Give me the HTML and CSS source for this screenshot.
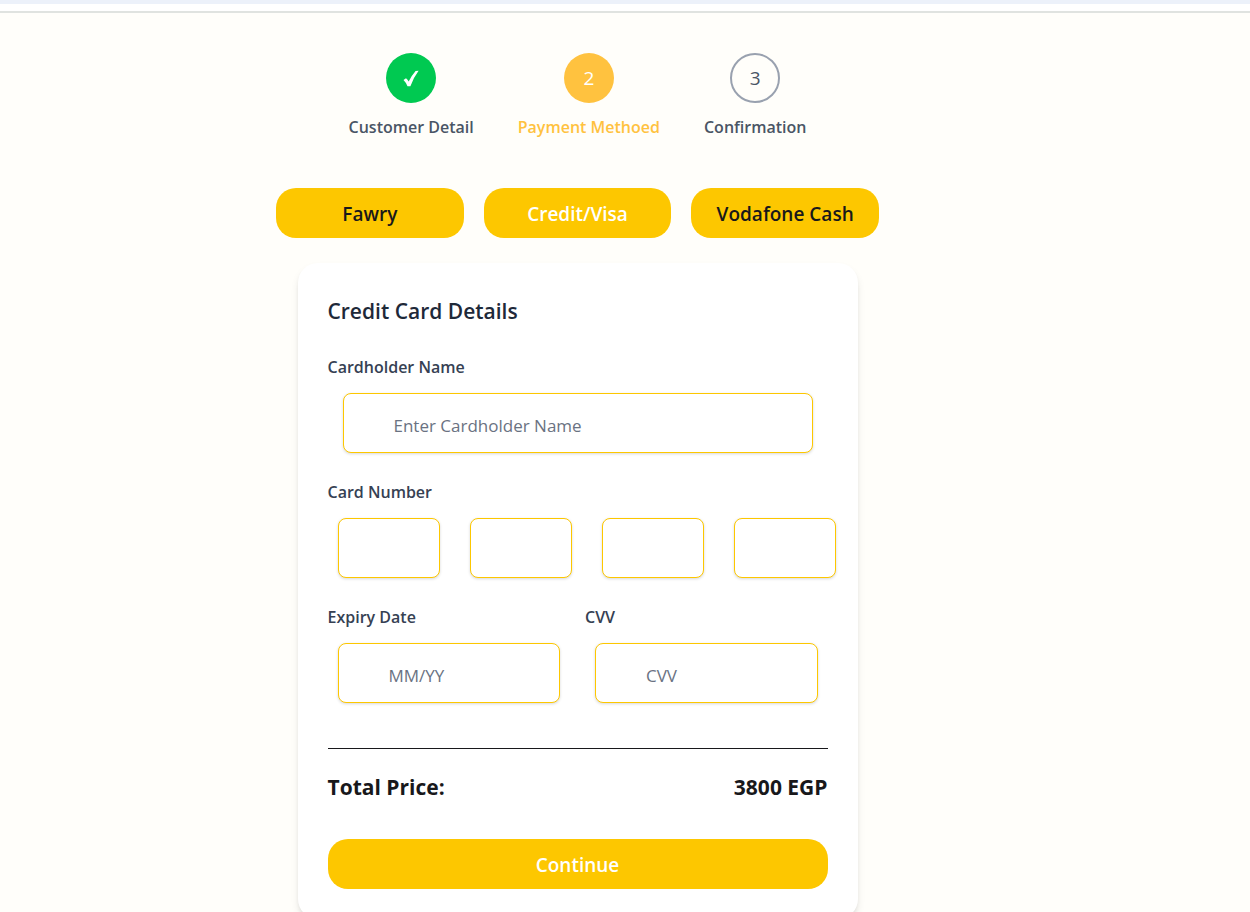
FILE: index.html
```html
<!DOCTYPE html>
<html lang="en">
<head>
<meta charset="utf-8">
<meta name="viewport" content="width=device-width, initial-scale=1">
<title>Payment Method</title>
<link rel="stylesheet" href="styles.css">
</head>
<body>
<header class="topbar"></header>
<main class="checkout">
  <ol class="steps">
    <li class="step">
      <span class="step-circle step-circle-done">
        <svg class="check" viewBox="0 0 18 18" role="img" aria-label="Done"><path d="M1.500 11 4 9.200Q5.700 10.400 6.700 12.600Q9.800 6.200 13.600 2L16.600 1.700Q11.500 8.500 8.400 17.200H5.500Q3.900 13.300 1.500 11Z"/></svg>
      </span>
      <span class="step-label">Customer Detail</span>
    </li>
    <li class="step step-current" aria-current="step">
      <span class="step-circle step-circle-current">2</span>
      <span class="step-label">Payment Methoed</span>
    </li>
    <li class="step">
      <span class="step-circle step-circle-next">3</span>
      <span class="step-label">Confirmation</span>
    </li>
  </ol>

  <div class="methods">
    <button type="button" class="button">Fawry</button>
    <button type="button" class="button button-light" aria-pressed="true">Credit/Visa</button>
    <button type="button" class="button">Vodafone Cash</button>
  </div>

  <form class="card">
    <h1 class="card-title">Credit Card Details</h1>
    <div class="field">
      <label class="label" for="holder">Cardholder Name</label>
      <div class="holder-box"><input class="input" id="holder" type="text" placeholder="Enter Cardholder Name"></div>
    </div>
    <div class="field" role="group" aria-labelledby="number-label">
      <label class="label" id="number-label" for="number">Card Number</label>
      <div class="number-row">
        <input class="input input-digits" id="number" type="text" maxlength="4">
        <input class="input input-digits" type="text" maxlength="4" aria-label="Card number, second group">
        <input class="input input-digits" type="text" maxlength="4" aria-label="Card number, third group">
        <input class="input input-digits" type="text" maxlength="4" aria-label="Card number, fourth group">
      </div>
    </div>
    <div class="pair">
      <div class="field">
        <label class="label" for="expiry">Expiry Date</label>
        <div class="pair-box"><input class="input" id="expiry" type="text" placeholder="MM/YY"></div>
      </div>
      <div class="field">
        <label class="label" for="cvv">CVV</label>
        <div class="pair-box"><input class="input" id="cvv" type="text" placeholder="CVV"></div>
      </div>
    </div>
    <div class="total">
      <span>Total Price:</span>
      <span>3800 EGP</span>
    </div>
    <button type="submit" class="button button-light button-wide">Continue</button>
  </form>
</main>
</body>
</html>
```
FILE: styles.css
```css
*,
*::before,
*::after {
  box-sizing: border-box;
}

body {
  margin: 0;
  background: #fffefa;
  color: #18181b;
  font-family: "Segoe UI", "Open Sans", "Noto Sans", sans-serif;
  font-size: 16px;
  line-height: 28px;
}

.topbar {
  height: 13px;
  background: #fff;
  border-top: 4px solid #ecf1fa;
  border-bottom: 2px solid #e0e3e0;
}

.checkout {
  display: flex;
  flex-direction: column;
  align-items: center;
  padding: 40px 95px 0 0;
}

.steps {
  display: flex;
  gap: 44px;
  margin: 0;
  padding: 0;
  list-style: none;
  color: #4a5565;
}

.step {
  display: flex;
  flex-direction: column;
  align-items: center;
  gap: 10px;
}

.step-current {
  color: #ffc23f;
}

.step-circle {
  display: flex;
  align-items: center;
  justify-content: center;
  width: 50px;
  height: 50px;
  border-radius: 50%;
  font-size: 19px;
}

.step-circle-done {
  background: #00c951;
}

.step-circle-current {
  background: #ffc23f;
  color: #fff;
}

.step-circle-next {
  border: 2px solid #99a1af;
}

.check {
  width: 18px;
  height: 18px;
  fill: #fff;
}

.step-label {
  font-weight: 600;
}

.methods {
  display: grid;
  grid-template-columns: repeat(3, 1fr);
  gap: 20px;
  width: 100%;
  max-width: 603px;
  margin: 47px 0 25px;
}

.button {
  height: 50px;
  padding: 2px 16px 0;
  border: 0;
  border-radius: 20px;
  background: #fdc700;
  color: #18181b;
  font-family: inherit;
  font-size: 19px;
  font-weight: 600;
  cursor: pointer;
}

.button-light {
  color: #fff;
}

.button-wide {
  width: 100%;
}

.card {
  width: 100%;
  max-width: 560px;
  padding: 30px;
  border-radius: 20px;
  background: #fff;
  box-shadow: 0 5px 8px -1px rgb(0 0 0 / 10%), 0 3px 5px -2px rgb(0 0 0 / 10%);
}

.card-title {
  margin: 0 0 23px;
  color: #1e2939;
  font-size: 21px;
  font-weight: 600;
  line-height: 37px;
}

.field {
  margin-bottom: 25px;
}

.label {
  display: block;
  margin-bottom: 12px;
  color: #364153;
  font-weight: 600;
}

.input {
  display: block;
  width: 100%;
  height: 60px;
  padding: 5px 50px 0;
  border: 1px solid #fdc700;
  border-radius: 8px;
  background: #fff;
  box-shadow: 0 1px 3px rgb(0 0 0 / 16%);
  color: #18181b;
  font-family: inherit;
  font-size: 17px;
}

.input::placeholder {
  color: #6a7282;
  opacity: 1;
}

.input-digits {
  padding: 5px 20px 0;
}

.holder-box {
  padding: 0 15px;
}

.number-row {
  display: grid;
  grid-template-columns: repeat(4, 1fr);
  gap: 30px;
  margin: 0 -8px 0 10px;
}

.pair {
  display: grid;
  grid-template-columns: repeat(2, 1fr);
  gap: 15px;
}

.pair-box {
  padding: 0 10px;
}

.total {
  display: flex;
  justify-content: space-between;
  margin: 20px 0 33px;
  padding-top: 20px;
  border-top: 1px solid #18181b;
  font-size: 21px;
  font-weight: 700;
  line-height: 37px;
}
```
